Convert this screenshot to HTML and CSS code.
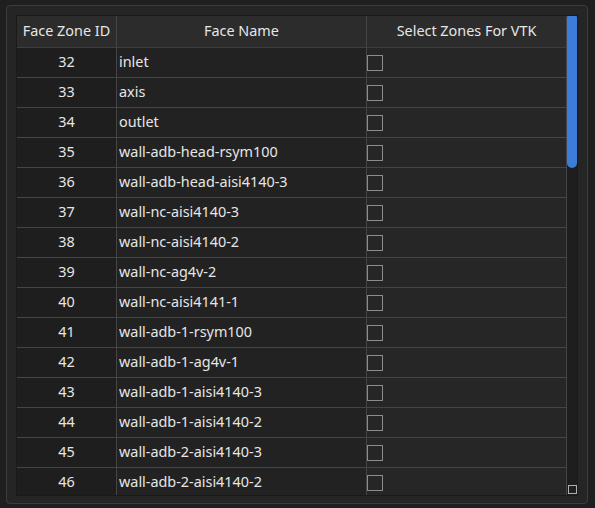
FILE: index.html
```html
<!DOCTYPE html>
<html lang="en">
<head>
  <meta charset="UTF-8" />
  <title>Face Zones</title>
  <link rel="stylesheet" href="styles.css">
</head>
<body>
  <div class="frame">
    <div class="view">
      <div class="grid">
        <div class="head">Face Zone ID</div>
        <div class="head">Face Name</div>
        <div class="head">Select Zones For VTK</div>

        <div class="cell id">32</div><div class="cell name">inlet</div><div class="cell pick"><span class="box"></span></div>
        <div class="cell id">33</div><div class="cell name">axis</div><div class="cell pick"><span class="box"></span></div>
        <div class="cell id">34</div><div class="cell name">outlet</div><div class="cell pick"><span class="box"></span></div>
        <div class="cell id">35</div><div class="cell name">wall-adb-head-rsym100</div><div class="cell pick"><span class="box"></span></div>
        <div class="cell id">36</div><div class="cell name">wall-adb-head-aisi4140-3</div><div class="cell pick"><span class="box"></span></div>
        <div class="cell id">37</div><div class="cell name">wall-nc-aisi4140-3</div><div class="cell pick"><span class="box"></span></div>
        <div class="cell id">38</div><div class="cell name">wall-nc-aisi4140-2</div><div class="cell pick"><span class="box"></span></div>
        <div class="cell id">39</div><div class="cell name">wall-nc-ag4v-2</div><div class="cell pick"><span class="box"></span></div>
        <div class="cell id">40</div><div class="cell name">wall-nc-aisi4141-1</div><div class="cell pick"><span class="box"></span></div>
        <div class="cell id">41</div><div class="cell name">wall-adb-1-rsym100</div><div class="cell pick"><span class="box"></span></div>
        <div class="cell id">42</div><div class="cell name">wall-adb-1-ag4v-1</div><div class="cell pick"><span class="box"></span></div>
        <div class="cell id">43</div><div class="cell name">wall-adb-1-aisi4140-3</div><div class="cell pick"><span class="box"></span></div>
        <div class="cell id">44</div><div class="cell name">wall-adb-1-aisi4140-2</div><div class="cell pick"><span class="box"></span></div>
        <div class="cell id">45</div><div class="cell name">wall-adb-2-aisi4140-3</div><div class="cell pick"><span class="box"></span></div>
        <div class="cell id">46</div><div class="cell name">wall-adb-2-aisi4140-2</div><div class="cell pick"><span class="box"></span></div>
      </div>
      <div class="scrollbar">
        <div class="track"><div class="thumb"></div></div>
        <div class="grip"></div>
      </div>
    </div>
  </div>
</body>
</html>
```

FILE: styles.css
```css
body {
  margin: 0;
  background: #1f1f1f;
  font-family: "Noto Sans", "Open Sans", sans-serif;
  font-size: 14.4px;
  color: #e6e6e6;
}

.frame {
  box-sizing: border-box;
  width: 582px;
  height: 499px;
  margin: 5px 0 0 6px;
  padding: 9px 9px 7px 9px;
  border: 1px solid #3c3c3c;
  border-radius: 4px;
  background: #252525;
}

.view {
  display: flex;
  height: 481px;
  box-sizing: border-box;
  border: 1px solid #1a1a1a;
  overflow: hidden;
}

.grid {
  display: grid;
  grid-template-columns: 100px 250px 200px;
  grid-auto-rows: 30px;
  grid-template-rows: 32px;
  width: 550px;
}

.head,
.cell {
  box-sizing: border-box;
  display: flex;
  align-items: center;
  padding-bottom: 2px;
  border-right: 1px solid #454545;
  border-bottom: 1px solid #454545;
}

.head {
  justify-content: center;
  background: #2c2c2c;
  border-bottom-color: #3e3e3e;
}

.cell.id {
  justify-content: center;
  background: #1e1e1e;
}

.cell.name {
  padding-left: 2px;
  background: #222222;
}

.cell.pick {
  padding-bottom: 0;
  background: #262626;
}

.box {
  width: 16px;
  height: 16px;
  box-sizing: border-box;
  border: 1px solid #8c8c8c;
  background: #262626;
}

.scrollbar {
  width: 11px;
  display: flex;
  flex-direction: column;
  background: #1e1e1e;
}

.track {
  flex: 1;
}

.thumb {
  height: 152px;
  background: #3b7dd8;
  border-radius: 1px 1px 5px 5px;
}

.grip {
  width: 9px;
  height: 9px;
  margin: 0 0 1px 1px;
  box-sizing: border-box;
  border: 1px solid #b0b0b0;
  background: #202020;
}
```
